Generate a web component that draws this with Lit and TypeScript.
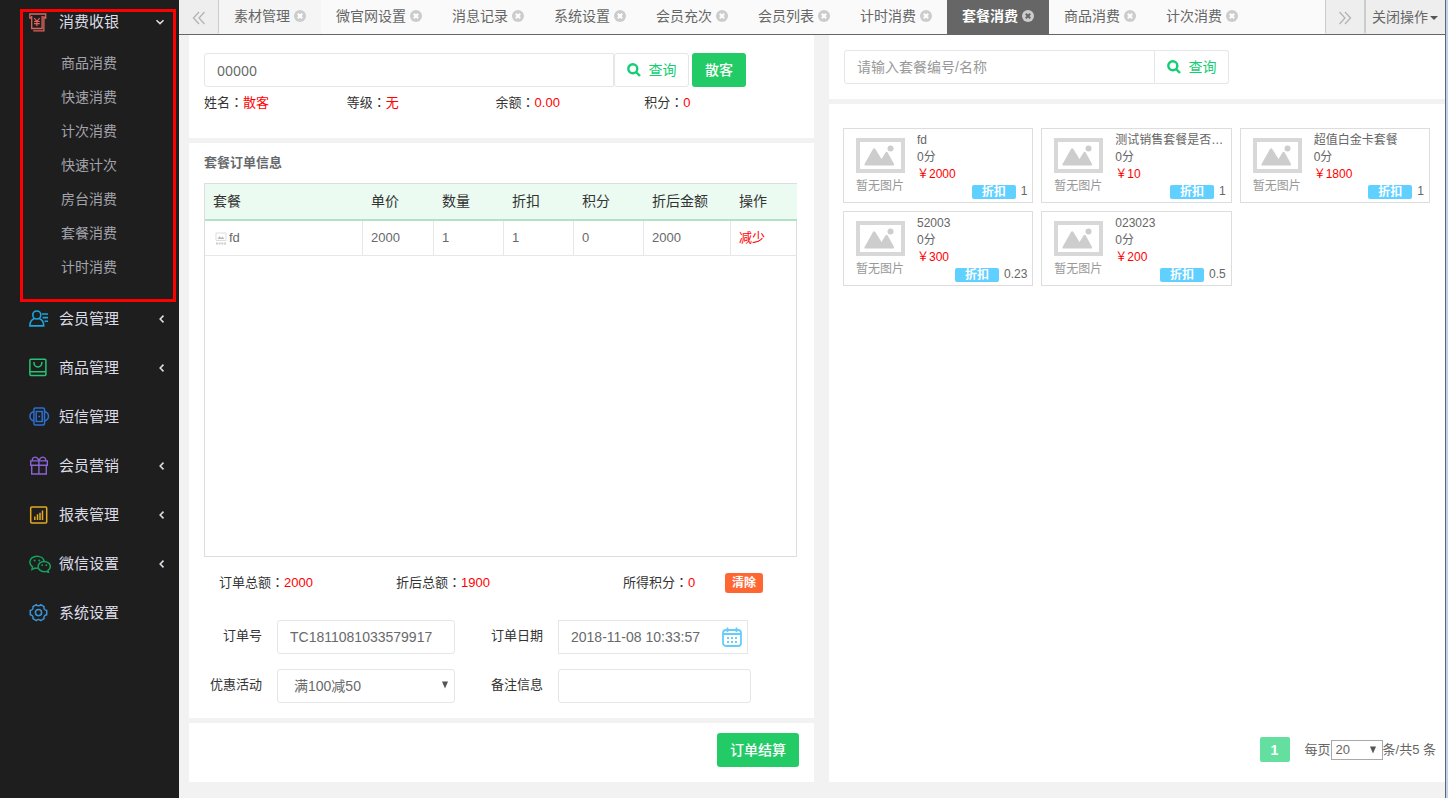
import { LitElement, html, css, svg, nothing } from "lit";
import { customElement, property, state } from "lit/decorators.js";
import { classMap } from "lit/directives/class-map.js";

const sans = css`"Liberation Sans", "Noto Sans CJK SC", sans-serif`;

const menuIcons: Record<string, unknown> = {
  cash: svg`<g stroke="#e0635c" fill="none" stroke-width="1.3">
    <path d="M2.500 5H.8V1h15.900v4H15"/><path d="M2.700 3v12.500h10.400V3M4.300 17.800h10.600V3"/>
    <path d="M5.200 5.200l2.700 3.100 2.700-3.100M7.900 8.300v4.900M5 8.500h5.800M5 10.700h5.800" stroke-width="1.200"/></g>`,
  member: svg`<g stroke="#1ba6dc" fill="none" stroke-width="1.6" transform="translate(0 1)">
    <circle cx="7.800" cy="5" r="4"/><path d="M5.400 8.600C2.500 9.600.9 12 .9 15.900h13.800c0-3.900-1.600-6.300-4.500-7.300"/>
    <path d="M13 4h6M13.600 7.600H19M15.500 11.200H19"/></g>`,
  goods: svg`<g stroke="#25c475" fill="none" stroke-width="1.500">
    <rect x=".9" y="1.200" width="16" height="16.300" rx="1"/><path d="M1 13.700h15.800M5 4v1a3.900 3.900 0 0 0 7.800 0V4"/></g>`,
  sms: svg`<g stroke="#2b6fd0" fill="none" stroke-width="1.500">
    <rect x="4.900" y="1" width="10.600" height="17" rx="1.500"/><rect x="7.200" y="4.500" width="6" height="10"/>
    <path d="M4.600 4.500C-.3 6.300-.3 12.400 4.600 14M15.800 4.500c4.900 1.800 4.900 7.900 0 9.500"/><path d="M9.400 9.500h1.600"/></g>`,
  gift: svg`<g stroke="#8a63d2" fill="none" stroke-width="1.400">
    <path d="M1.700 4.900h16.600v4.300H1.700zM2.700 9.200V18h14.600V9.200M9.900 4.900V18"/>
    <path d="M9.900 4.700C9 2.200 7.600 1.100 6 1.100c-2 0-3.200 1.900-2.500 3.800M9.900 4.700c.9-2.500 2.500-3.600 4.100-3.600 2 0 3.200 1.900 2.500 3.800"/></g>`,
  report: svg`<g stroke="#e5a823" fill="none" stroke-width="1.500" transform="translate(0 .8)">
    <rect x="1.700" y="1.200" width="16" height="16" rx="1"/><path d="M5.800 14.300v-3.600M8.500 14.300V8.500M11 14.300V7M13.500 14.300V4.800"/></g>`,
  wechat: svg`<g transform="translate(0 1)"><g stroke="#16a05d" fill="none" stroke-width="1.500">
    <path d="M8.800 13.200c-.8.100-1.900 0-2.700-.2L3 14.500l.5-2.700C1.900 10.600.8 8.900.8 7.100.8 3.800 4 1.200 8 1.200c3.700 0 6.700 2.200 7.100 5.100"/>
    <path d="M15.200 6.400c3.400 0 6.100 2.200 6.100 5 0 1.700-1 3.100-2.300 4l.5 2-2.200-1c-.6.200-1.300.3-2.100.3-3.400 0-6.100-2.300-6.100-5.200s2.700-5.100 6.100-5.100z"/></g>
    <g fill="#16a05d"><circle cx="5.600" cy="5.400" r="1"/><circle cx="10.300" cy="5.400" r="1"/><circle cx="13.200" cy="10.200" r=".9"/><circle cx="17.300" cy="10.200" r=".9"/></g></g>`,
  gear: svg`<g stroke="#3d93d6" fill="none" stroke-width="1.500" transform="translate(0 .5)">
    <path d="M7.200 1.200c1.100 1.500 3.500 1.500 4.600 0l3.200 1.800c-.5 2 .5 3.500 2.700 3.900v4.300c-2.200.4-3.200 2-2.700 4l-3.200 1.900c-1.100-1.600-3.500-1.600-4.600 0L4 15.200c.5-2-.5-3.600-2.700-4V6.900C3.500 6.500 4.500 5 4 3z"/>
    <circle cx="9.500" cy="9.100" r="3.100"/></g>`,
};

interface MenuGroup { icon: string; label: string; children?: boolean; }

const groups: MenuGroup[] = [
  { icon: "member", label: "会员管理", children: true },
  { icon: "goods", label: "商品管理", children: true },
  { icon: "sms", label: "短信管理" },
  { icon: "gift", label: "会员营销", children: true },
  { icon: "report", label: "报表管理", children: true },
  { icon: "wechat", label: "微信设置", children: true },
  { icon: "gear", label: "系统设置" },
];

const cashItems = ["商品消费", "快速消费", "计次消费", "快速计次", "房台消费", "套餐消费", "计时消费"];

@customElement("side-menu")
class SideMenu extends LitElement {
  static styles = css`
    :host { display: block; position: relative; width: 179px; flex: none; background: #1e1e1e; font-family: ${sans}; }
    .row { display: flex; align-items: center; width: 100%; height: 49px; padding: 0 14px 0 29px; border: 0; background: none; color: #dcdce6; font: 15px/20px ${sans}; text-align: left; cursor: pointer; }
    .row.open { height: 44px; }
    .icon { width: 22px; height: 19px; margin-right: 8px; }
    .text { flex: 1; }
    .chevron { width: 8px; height: 10px; }
    .open .chevron { width: 10px; height: 8px; }
    .sub { margin: 0; padding: 2px 0 10px; list-style: none; }
    .link { display: block; padding-left: 61px; color: #a3a3ac; font-size: 14px; line-height: 34px; text-decoration: none; }
    .mark { position: absolute; left: 20px; right: 3px; top: 9px; height: 293px; box-sizing: border-box; border: 3px solid #ff0000; pointer-events: none; }
  `;
  icon(name: string) {
    return html`<svg class="icon" viewBox="0 0 22 19" aria-hidden="true">${menuIcons[name]}</svg>`;
  }
  render() {
    return html`
      <nav>
        <button class="row open" aria-expanded="true">
          ${this.icon("cash")}<span class="text">消费收银</span>
          <svg class="chevron" viewBox="0 0 10 8" aria-hidden="true"><path d="M1.500 2.200L5 5.600l3.500-3.400" fill="none" stroke="#dcdce6" stroke-width="1.600"/></svg>
        </button>
        <ul class="sub">${cashItems.map((t) => html`<li><a class="link" href="#">${t}</a></li>`)}</ul>
        ${groups.map((g) => html`
          <button class="row">
            ${this.icon(g.icon)}<span class="text">${g.label}</span>
            ${g.children ? html`<svg class="chevron" viewBox="0 0 8 10" aria-hidden="true"><path d="M6.500 1.600L3.200 5l3.300 3.400" fill="none" stroke="#dcdce6" stroke-width="1.600"/></svg>` : nothing}
          </button>`)}
      </nav>
      <div class="mark"></div>`;
  }
}

@customElement("tab-bar")
class TabBar extends LitElement {
  static styles = css`
    :host { display: flex; height: 35px; background: #fafafa; border-bottom: 1px solid #666; font-family: ${sans}; }
    .tabs { display: flex; flex: 1; min-width: 0; overflow: hidden; }
    .tab { display: flex; align-items: center; gap: 4px; flex: none; padding: 0 15px 2px; color: #666; font-size: 14px; line-height: 20px; }
    .tab.first { background: #f5f5f5; }
    .tab.active { background: #666; color: #fff; font-weight: bold; }
    .name { color: inherit; text-decoration: none; }
    .close { display: block; width: 12px; height: 12px; padding: 0; border: 0; background: none; cursor: pointer; }
    .x { display: block; width: 12px; height: 12px; fill: #ccc; stroke: #fff; stroke-width: 2; }
    .active .x { stroke: #666; }
    .side { box-sizing: border-box; flex: none; width: 40px; padding: 0; border: 0 solid #ccc; border-radius: 0 0 2px 2px; background: #eee; color: #666; font: 14px/20px ${sans}; cursor: pointer; }
    .left { border-right-width: 1px; }
    .right { border-left-width: 1px; border-right-width: 1px; }
    .ops { width: 80px; border-left-width: 1px; text-align: left; padding-left: 6px; white-space: nowrap; }
    .arrows { width: 14px; height: 14px; vertical-align: middle; fill: none; stroke: #b4b4b4; stroke-width: 1.3; }
    .caret { display: inline-block; margin-left: 2px; border: 4px solid transparent; border-top-color: #555; border-bottom: 0; vertical-align: middle; }
  `;
  @state() tabs = ["素材管理", "微官网设置", "消息记录", "系统设置", "会员充次", "会员列表", "计时消费", "套餐消费", "商品消费", "计次消费"];
  @state() current = 7;
  render() {
    return html`
      <button class="side left" aria-label="向左"><svg class="arrows" viewBox="0 0 14 14"><path d="M7 1L1.500 7 7 13M12.500 1L7 7l5.500 6"/></svg></button>
      <div class="tabs">
        ${this.tabs.map((t, i) => html`
          <div class=${classMap({ tab: true, first: i === 0, active: i === this.current })}>
            <a class="name" href="#">${t}</a>
            <button class="close" aria-label="关闭"><svg class="x" viewBox="0 0 12 12"><circle cx="6" cy="6" r="6" stroke="none"/><path d="M3.800 3.800l4.400 4.400M8.200 3.800L3.800 8.200"/></svg></button>
          </div>`)}
      </div>
      <button class="side right" aria-label="向右"><svg class="arrows" viewBox="0 0 14 14"><path d="M1.500 1L7 7l-5.500 6M7 1l5.500 6L7 13"/></svg></button>
      <button class="side ops">关闭操作<span class="caret"></span></button>`;
  }
}

const picture = svg`
  <rect x="2" y="2" width="45" height="31" fill="#fff" stroke="#d8d8d8" stroke-width="4"/>
  <circle cx="34.500" cy="10.500" r="3" fill="#cdcdcd"/>
  <path d="M9.500 27.500c-1 0-1.400-.9-.8-1.800L17 11c.6-1 1.700-1 2.300 0l6.200 10 4-6.500c.6-.9 1.600-.9 2.200 0l6.200 11.200c.5.900.1 1.800-.9 1.800z" fill="#cdcdcd"/>`;

@customElement("package-card")
class PackageCard extends LitElement {
  static styles = css`
    :host { display: flex; box-sizing: border-box; height: 75px; padding: 3px 5px 3px 12px; border: 1px solid #ddd; background: #fff; color: #666; font: 12px/17px ${sans}; }
    .pic { flex: none; width: 49px; padding-top: 6px; color: #999; }
    .img { display: block; width: 49px; height: 35px; margin-bottom: 5px; }
    .body { flex: 1; min-width: 0; padding-left: 12px; }
    .name { white-space: nowrap; }
    .price { color: #f00; }
    .foot { display: flex; justify-content: flex-end; align-items: center; gap: 5px; line-height: 17px; }
    .badge { width: 44px; height: 14px; border-radius: 2px; background: #5fd0ff; color: #fff; font-weight: bold; line-height: 14px; text-align: center; }
  `;
  @property() name = "";
  @property() price = "";
  @property() discount = "";
  render() {
    return html`
      <div class="pic"><svg class="img" viewBox="0 0 49 35" aria-hidden="true">${picture}</svg>暂无图片</div>
      <div class="body">
        <div class="name">${this.name}</div>
        <div>0分</div>
        <div class="price">￥${this.price}</div>
        <div class="foot"><span class="badge">折扣</span><span>${this.discount}</span></div>
      </div>`;
  }
}

const packages = [
  ["fd", "2000", "1"],
  ["测试销售套餐是否…", "10", "1"],
  ["超值白金卡套餐", "1800", "1"],
  ["52003", "300", "0.23"],
  ["023023", "200", "0.5"],
];

const searchIcon = html`<svg class="search" viewBox="0 0 14 14" aria-hidden="true"><circle cx="5.800" cy="5.800" r="4.500"/><path d="M9 9l4 4"/></svg>`;

@customElement("app-root")
class AppRoot extends LitElement {
  static styles = css`
    :host { display: flex; min-height: 100vh; background: #f2f2f2; color: #333; font: 13px/20px ${sans}; }
    * { box-sizing: border-box; }
    .main { display: flex; flex-direction: column; flex: 1; min-width: 0; }
    .edge { flex: none; width: 3px; border-left: 1px solid #5d6875; background: #c3d4ea; }
    .cols { display: grid; grid-template-columns: 625fr 616fr; gap: 15px; flex: 1; padding: 0 0 16px 10px; }
    .col { display: flex; flex-direction: column; gap: 5px; min-width: 0; }
    .panel { background: #fff; }
    .grow { display: flex; flex-direction: column; flex: 1; }

    .field { width: 100%; height: 34px; padding: 0 12px; border: 1px solid #e5e6e7; border-radius: 3px; background: #fff; color: #676a6c; font: 14px/20px ${sans}; outline: 0; }
    .field::placeholder { color: #999; opacity: 1; }
    .code { font-family: "Noto Sans", "Noto Sans CJK SC", sans-serif; }
    .query { display: flex; flex: none; align-items: center; justify-content: center; gap: 8px; width: 75px; height: 34px; padding: 0; border: 1px solid #e5e6e7; border-radius: 3px; background: #fff; color: #13ce72; font: 14px/20px ${sans}; cursor: pointer; }
    .search { width: 14px; height: 14px; fill: none; stroke: #13ce72; stroke-width: 2.4; }
    .green { height: 34px; padding: 0 13px; border: 0; border-radius: 3px; background: #23cb66; color: #fff; font: 500 14px/20px ${sans}; cursor: pointer; }
    .bar { display: flex; }
    .bar .field { border-radius: 3px 0 0 3px; }

    .customer { padding: 18px 15px 25px; }
    .customer .bar { width: 542px; max-width: 100%; }
    .customer .green { flex: none; width: 54px; margin-left: 3px; }
    .facts { display: grid; grid-template-columns: 24fr 25fr 25fr 26fr; margin-top: 5px; }
    .colon { font-family: "Noto Sans CJK TC", sans-serif; }
    .red { color: #f00; }

    .order { padding: 10px 17px 15px 15px; }
    .title { margin: 0 0 10px; color: #676a6c; font-size: 13px; line-height: 20px; }
    .box { flex: 1; min-height: 200px; border: 1px solid #ddd; }
    .table { width: 100%; border-collapse: separate; border-spacing: 0; table-layout: fixed; }
    .table th { height: 37px; padding: 0 8px 2px; border-bottom: 2px solid #b0e3c4; background: #ebfbf1; font-size: 14px; font-weight: normal; text-align: left; }
    .table td { height: 35px; padding: 0 8px; border: 0 solid #e7e7e7; border-width: 0 1px 1px 0; color: #676a6c; }
    .table td:last-child { border-right-width: 0; }
    .c1 { width: 158px; } .c2 { width: 71px; } .c3 { width: 70px; } .c6 { width: 87px; } .c7 { width: 66px; }
    .item { display: flex; align-items: center; gap: 2px; padding-left: 2px; }
    .thumb { width: 12px; height: 13px; }
    .drop { color: #f00; text-decoration: none; }

    .totals { display: flex; align-items: center; padding: 15px 34px 15px 15px; }
    .t1 { flex: 177; } .t2 { flex: 227; } .t3 { flex: 102; }
    .clear { flex: none; width: 38px; height: 20px; padding: 0; border: 0; border-radius: 3px; background: #ff6632; color: #fff; font: bold 12px/20px ${sans}; cursor: pointer; }
    .form { display: grid; grid-template-columns: 58px 178px 73px 193px; column-gap: 15px; row-gap: 15px; padding-top: 12px; }
    .form label { padding-top: 6px; text-align: right; }
    .wrap { position: relative; }
    .date { width: 190px; }
    .date .field { border-radius: 0; }
    .cal { position: absolute; right: 6px; top: 7px; width: 20px; height: 20px; padding: 0; border: 0; background: none; cursor: pointer; }
    .calicon { display: block; width: 20px; height: 20px; }
    .pick { appearance: none; padding: 0 16px; }
    .down { position: absolute; right: 7px; top: 12px; width: 6px; height: 8px; fill: #555; pointer-events: none; }

    .submit { display: flex; justify-content: flex-end; padding: 10px 15px 15px; }
    .find { padding: 15px; }
    .find .bar { width: 385px; max-width: 100%; }
    .find .query { width: 74px; border-left: 0; border-radius: 0 3px 3px 0; }
    .list { padding: 24px 8px 20px 14px; justify-content: space-between; }
    .cards { display: grid; grid-template-columns: repeat(3, minmax(0, 1fr)); gap: 8px; padding-right: 7px; }
    .pager { display: flex; align-items: center; justify-content: flex-end; padding-right: 1px; color: #666; }
    .page { width: 30px; height: 25px; margin-right: 15px; padding: 0; border: 0; border-radius: 2px; background: #64dfa0; color: #fff; font: bold 14px/20px ${sans}; }
    .size { appearance: none; display: block; width: 52px; height: 20px; padding: 0 4px; border: 1px solid #a9a9a9; border-radius: 0; background: #fff; color: #666; font: 13px/18px ${sans}; }
    .size + .down { top: 6px; }
  `;

  fact(label: string, value: string, cls = "") {
    return html`<span class=${cls}>${label}<span class="colon">：</span><span class="red">${value}</span></span>`;
  }

  down() {
    return html`<svg class="down" viewBox="0 0 6 8" aria-hidden="true"><path d="M0 .5h6L3 7.500z"/></svg>`;
  }

  render() {
    return html`
      <side-menu></side-menu>
      <div class="main">
        <tab-bar></tab-bar>
        <div class="cols">
          <div class="col">
            <section class="panel customer">
              <div class="bar">
                <input class="field code" aria-label="会员卡号" value="00000">
                <button class="query">${searchIcon}查询</button>
                <button class="green">散客</button>
              </div>
              <div class="facts">
                ${this.fact("姓名", "散客")}${this.fact("等级", "无")}${this.fact("余额", "0.00")}${this.fact("积分", "0")}
              </div>
            </section>
            <section class="panel grow order">
              <h2 class="title">套餐订单信息</h2>
              <div class="box">
                <table class="table">
                  <thead><tr>
                    <th class="c1">套餐</th><th class="c2">单价</th><th class="c3">数量</th><th class="c3">折扣</th>
                    <th class="c3">积分</th><th class="c6">折后金额</th><th class="c7">操作</th>
                  </tr></thead>
                  <tbody><tr>
                    <td><div class="item">
                      <svg class="thumb" viewBox="0 0 12 13" aria-hidden="true"><path d="M1 1h10v7.500H1z" fill="#fff" stroke="#ddd"/><path d="M2.500 7l2-3 1.500 2 1.500-1.500L9.500 7z" fill="#bbb"/><path d="M1 11.500h10" stroke="#ccc" stroke-width="2" stroke-dasharray="2 .7"/></svg>fd</div></td>
                    <td>2000</td><td>1</td><td>1</td><td>0</td><td>2000</td>
                    <td><a class="drop" href="#">减少</a></td>
                  </tr></tbody>
                </table>
              </div>
              <div class="totals">
                ${this.fact("订单总额", "2000", "t1")}${this.fact("折后总额", "1900", "t2")}${this.fact("所得积分", "0", "t3")}
                <button class="clear">清除</button>
              </div>
              <div class="form">
                <label for="no">订单号</label>
                <input id="no" class="field" value="TC1811081033579917">
                <label for="date">订单日期</label>
                <div class="wrap date">
                  <input id="date" class="field" value="2018-11-08 10:33:57">
                  <button class="cal" aria-label="选择日期"><svg class="calicon" viewBox="0 0 20 20"><g fill="none" stroke="#66ccfa" stroke-width="1.800"><rect x="1" y="3" width="18" height="16" rx="3"/><path d="M1 7h18M5.500.5v4.500M14.500.5v4.500"/></g><g stroke="#66ccfa" stroke-width="2" stroke-dasharray="2 2"><path d="M5 11h10M5 15h10"/></g></svg></button>
                </div>
                <label for="promo">优惠活动</label>
                <div class="wrap">
                  <select id="promo" class="field pick"><option>满100减50</option></select>${this.down()}
                </div>
                <label for="note">备注信息</label>
                <input id="note" class="field">
              </div>
            </section>
            <section class="panel submit"><button class="green">订单结算</button></section>
          </div>
          <div class="col">
            <section class="panel find">
              <div class="bar">
                <input class="field" aria-label="套餐" placeholder="请输入套餐编号/名称">
                <button class="query">${searchIcon}查询</button>
              </div>
            </section>
            <section class="panel grow list">
              <div class="cards">
                ${packages.map(([n, p, d]) => html`<package-card .name=${n} .price=${p} .discount=${d}></package-card>`)}
              </div>
              <div class="pager">
                <button class="page">1</button>
                <label for="size">每页</label>
                <div class="wrap"><select id="size" class="size"><option>20</option></select>${this.down()}</div>
                <span>条/共5 条</span>
              </div>
            </section>
          </div>
        </div>
      </div>
      <div class="edge"></div>`;
  }
}
